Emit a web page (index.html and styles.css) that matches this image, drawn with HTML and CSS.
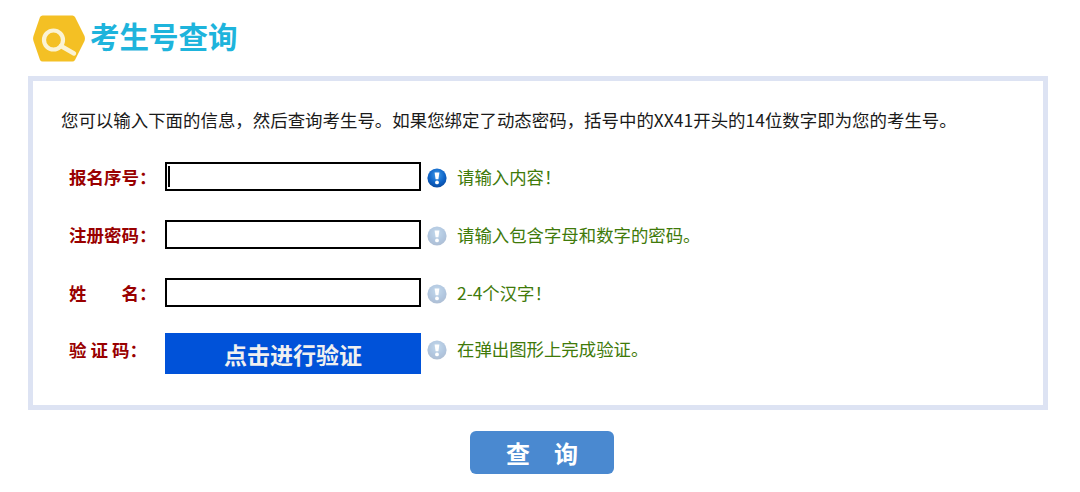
FILE: index.html
```html
<!DOCTYPE html>
<html lang="zh">
<head>
<meta charset="utf-8">
<title>考生号查询</title>
<link rel="stylesheet" href="styles.css">
</head>
<body>
<svg class="defs" width="0" height="0" aria-hidden="true">
  <defs>
    <radialGradient id="ball" cx="50%" cy="35%" r="65%">
      <stop offset="0" stop-color="#3f9be8"/>
      <stop offset="0.65" stop-color="#0d62c6"/>
      <stop offset="1" stop-color="#0a4aa0"/>
    </radialGradient>
    <symbol id="tip" viewBox="0 0 20 20">
      <circle cx="10" cy="10" r="9.6" fill="url(#ball)"/>
      <path d="M7.6 4.5H12.4L11.4 11.2H8.6Z" fill="#fff"/>
      <circle cx="10" cy="14.4" r="1.9" fill="#fff"/>
    </symbol>
  </defs>
</svg>
<div class="page">
  <header class="head">
    <svg class="logo" width="52" height="47" viewBox="0 0 52 47">
      <path d="M9.5 0.5H39.5Q41 0.5 42 2L51.5 21Q52.3 23.5 51.5 26L42 45Q41 46.5 39.5 46.5H9.5Q8 46.5 7 45L0.5 26Q-0.3 23.5 0.5 21L7 2Q8 0.5 9.5 0.5Z" fill="#f4c024"/>
      <circle cx="20.5" cy="25" r="9.5" fill="none" stroke="#fbf3d4" stroke-width="4.2"/>
      <path d="M28 31L41 38.5" stroke="#fbf3d4" stroke-width="4.4" stroke-linecap="round"/>
    </svg>
    <h1 class="title">考生号查询</h1>
  </header>
  <section class="box">
    <p class="intro">您可以输入下面的信息，然后查询考生号。如果您绑定了动态密码，括号中的XX41开头的14位数字即为您的考生号。</p>
    <div class="row">
      <span class="label">报名序号：</span>
      <div class="field focus"></div>
      <svg class="tip" width="20" height="20"><use href="#tip"/></svg>
      <span class="hint">请输入内容！</span>
    </div>
    <div class="row">
      <span class="label">注册密码：</span>
      <div class="field"></div>
      <svg class="tip dim" width="20" height="20"><use href="#tip"/></svg>
      <span class="hint">请输入包含字母和数字的密码。</span>
    </div>
    <div class="row">
      <span class="label spread">姓<i class="gap"></i>名：</span>
      <div class="field"></div>
      <svg class="tip dim" width="20" height="20"><use href="#tip"/></svg>
      <span class="hint">2-4个汉字！</span>
    </div>
    <div class="row row-verify">
      <span class="label">验 证 码：</span>
      <div class="verify">点击进行验证</div>
      <svg class="tip dim" width="20" height="20"><use href="#tip"/></svg>
      <span class="hint">在弹出图形上完成验证。</span>
    </div>
  </section>
  <div class="actions"><button class="submit">查&ensp;&ensp;询</button></div>
</div>
</body>
</html>
```
FILE: styles.css
```css
* { box-sizing: border-box; }
html, body { margin: 0; padding: 0; background: #fff; }
body { font-family: "Noto Sans CJK SC", "Liberation Sans", sans-serif; width: 1080px; height: 492px; overflow: hidden; }
.defs { position: absolute; }
.page { padding: 15px 32px 0 28px; }
.head { display: flex; align-items: center; height: 47px; padding-left: 5px; gap: 5px; }
.logo { flex: none; }
.title { margin: 0 0 6px; font-size: 29.5px; font-weight: 700; line-height: 41px; color: #1eb4dc; }
.box { margin-top: 14px; height: 334px; border: 5px solid #dde3f3; padding: 26px 0 0 28px; }
.intro { margin: 0 0 28px; font-size: 17.45px; line-height: 26px; color: #1a1a1a; white-space: nowrap; }
.row { display: flex; align-items: center; height: 30px; margin-bottom: 28px; }
.row-verify { height: 41px; margin-top: -2px; }
.label { width: 104px; padding-left: 8px; font-size: 17.5px; font-weight: 700; color: #990000; white-space: nowrap; flex: none; }
.spread { display: flex; }
.gap { width: 35px; }
.field { width: 256px; height: 29px; border: 2px solid #000; flex: none; position: relative; background: #fff; }
.focus::before { content: ""; position: absolute; left: 1px; top: 2px; bottom: 2px; width: 2px; background: #000; }
.verify { width: 256px; height: 41px; background: #0052d9; color: #f0f0f0; font-size: 23px; font-weight: 700; display: flex; align-items: center; justify-content: center; flex: none; }
.tip { flex: none; margin: 4px 0 0 6px; }
.dim { opacity: 0.35; filter: grayscale(0.3); }
.hint { margin-left: 10px; font-size: 17.4px; color: #3f7a0a; white-space: nowrap; }
.row-verify .label { margin-bottom: 8px; }
.row-verify .tip { margin: 0 0 8px 6px; }
.row-verify .hint { margin-bottom: 10px; }
.actions { display: flex; justify-content: center; margin-top: 21px; padding-left: 8px; }
.submit { width: 144px; height: 43px; border: 0; border-radius: 6px; background: #4a89d0; color: #fff; font-family: inherit; font-size: 24px; font-weight: 700; padding: 0; }
```
